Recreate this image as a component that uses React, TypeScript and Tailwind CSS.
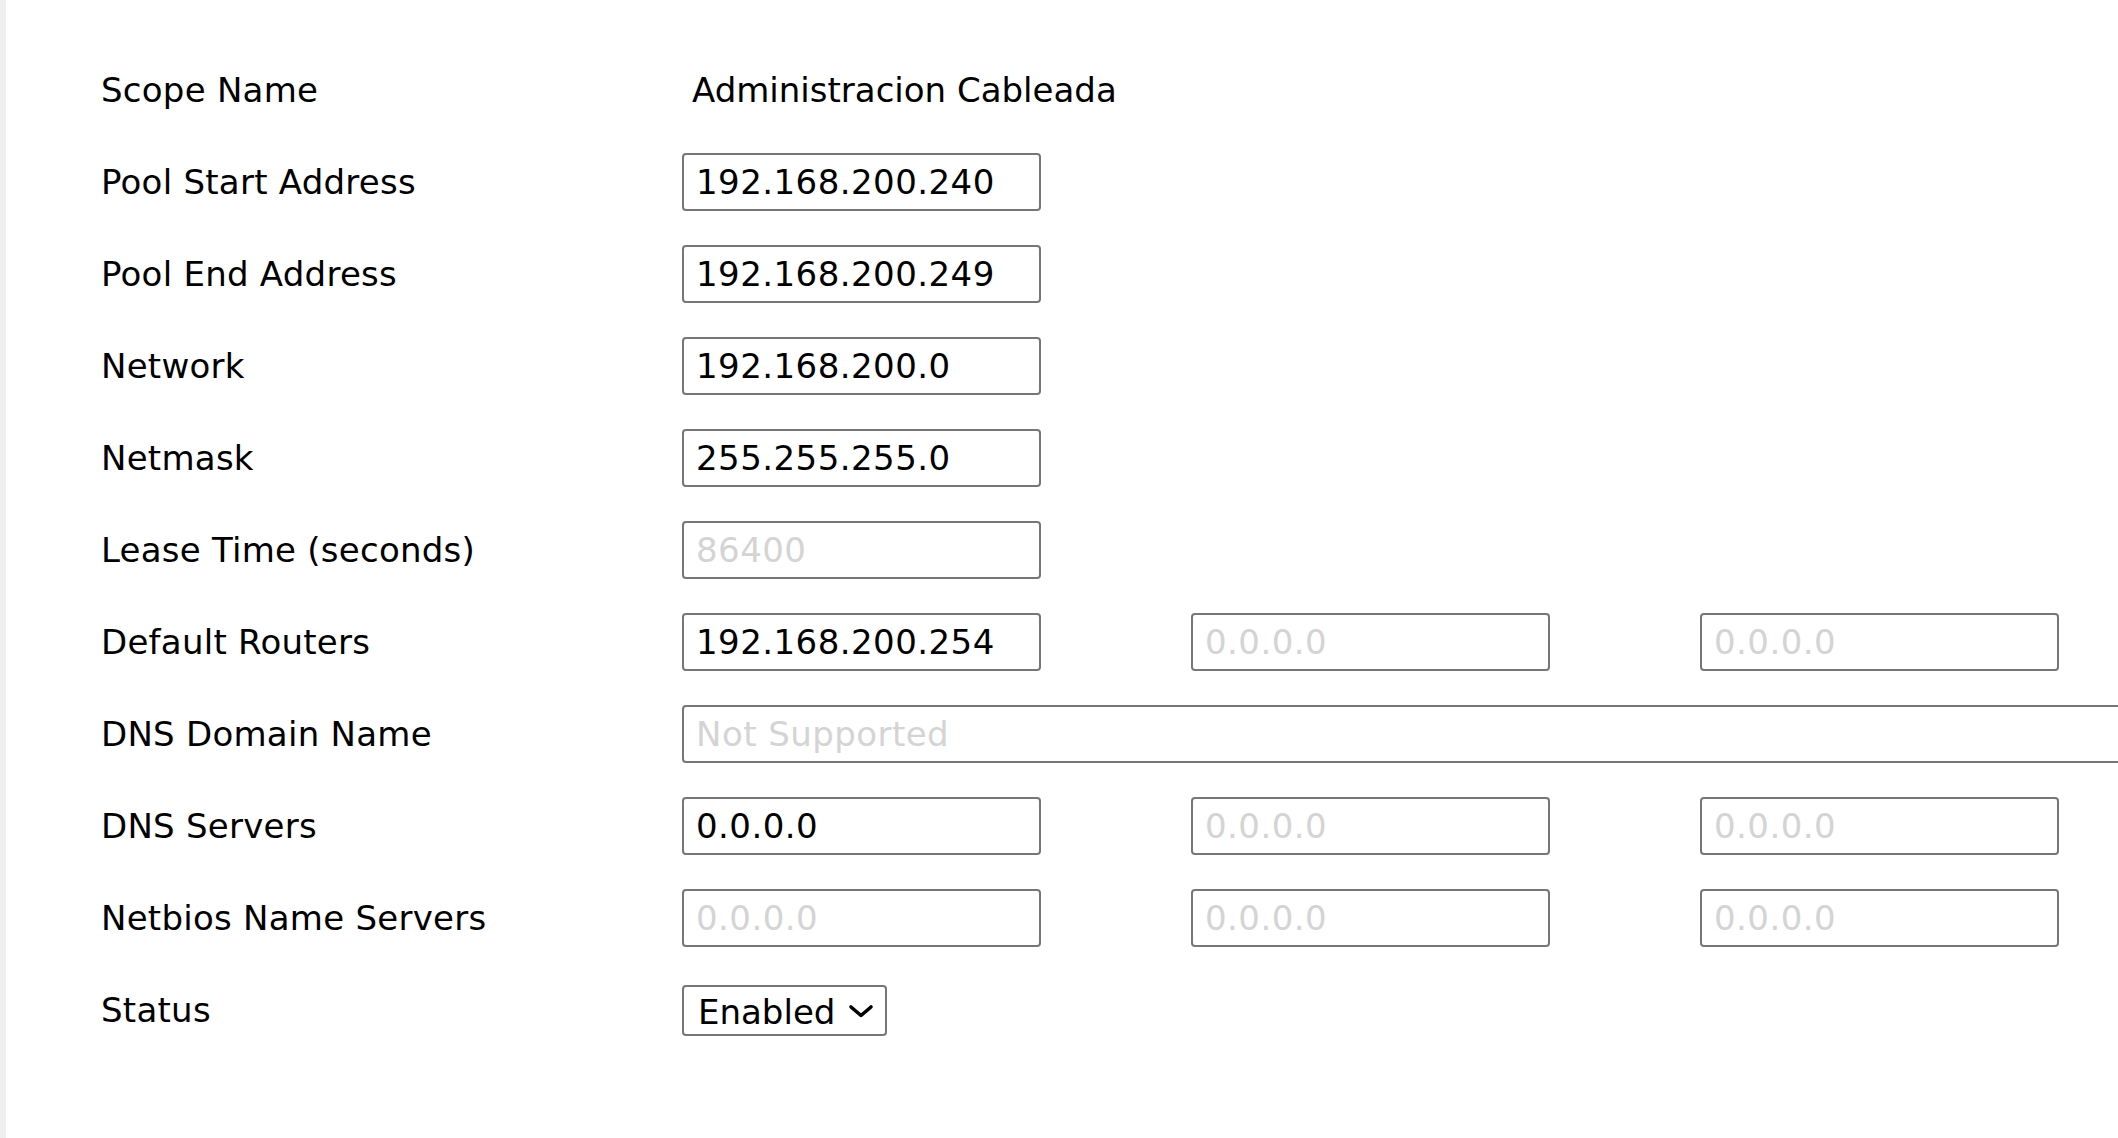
import React from "react";

type Field = {
	label: string;
	values?: { value?: string; placeholder?: string }[];
	text?: string;
	wide?: string;
	select?: string;
};

const fields: Field[] = [
	{ label: "Scope Name", text: "Administracion Cableada" },
	{ label: "Pool Start Address", values: [{ value: "192.168.200.240" }] },
	{ label: "Pool End Address", values: [{ value: "192.168.200.249" }] },
	{ label: "Network", values: [{ value: "192.168.200.0" }] },
	{ label: "Netmask", values: [{ value: "255.255.255.0" }] },
	{ label: "Lease Time (seconds)", values: [{ placeholder: "86400" }] },
	{
		label: "Default Routers",
		values: [{ value: "192.168.200.254" }, { placeholder: "0.0.0.0" }, { placeholder: "0.0.0.0" }],
	},
	{ label: "DNS Domain Name", wide: "Not Supported" },
	{
		label: "DNS Servers",
		values: [{ value: "0.0.0.0" }, { placeholder: "0.0.0.0" }, { placeholder: "0.0.0.0" }],
	},
	{
		label: "Netbios Name Servers",
		values: [{ placeholder: "0.0.0.0" }, { placeholder: "0.0.0.0" }, { placeholder: "0.0.0.0" }],
	},
	{ label: "Status", select: "Enabled" },
];

const inputCls =
	"h-[58px] shrink-0 border-2 border-[#767676] rounded-[4px] bg-white pl-[12px] pr-2 text-[34px] tracking-[0.45px] text-black placeholder:text-[#d4d4d4] outline-none";

const Chevron = () => (
	<svg
		className="pointer-events-none absolute right-[13px] top-[19px]"
		width="26"
		height="14"
		viewBox="0 0 26 14"
		fill="none"
	>
		<polyline points="3,3 13,11.5 23,3" stroke="black" strokeWidth="3.6" strokeLinecap="round" strokeLinejoin="round" />
	</svg>
);

export default function App()
{
	return (
		<div className="flex h-[1138px] w-full overflow-hidden bg-white font-['DejaVu_Sans',sans-serif] text-black">
			<div className="w-[6px] shrink-0 bg-[#efefef]" />
			<div className="flex min-w-0 flex-1 flex-col pl-[95px] pt-[44px]">
				{fields.map((f) => (
					<div key={f.label} className="flex h-[92px] shrink-0 items-center">
						<div className="w-[581px] shrink-0 text-[34px] leading-none tracking-[0.25px]">{f.label}</div>
						{f.text && <div className="ml-[10px] text-[34px] leading-none">{f.text}</div>}
						{f.values && (
							<div className="flex gap-[150px]">
								{f.values.map((v, i) => (
									<input
										key={i}
										className={`${inputCls} w-[359px]`}
										defaultValue={v.value}
										placeholder={v.placeholder}
									/>
								))}
							</div>
						)}
						{f.wide && <input className={`${inputCls} w-[1500px]`} placeholder={f.wide} />}
						{f.select && (
							<div className="relative">
								<select
									className="h-[51px] w-[205px] appearance-none rounded-[4px] border-2 border-[#767676] bg-white pl-[14px] text-[34px] text-black outline-none"
									defaultValue={f.select}
								>
									<option>Enabled</option>
									<option>Disabled</option>
								</select>
								<Chevron />
							</div>
						)}
					</div>
				))}
			</div>
		</div>
	);
}
